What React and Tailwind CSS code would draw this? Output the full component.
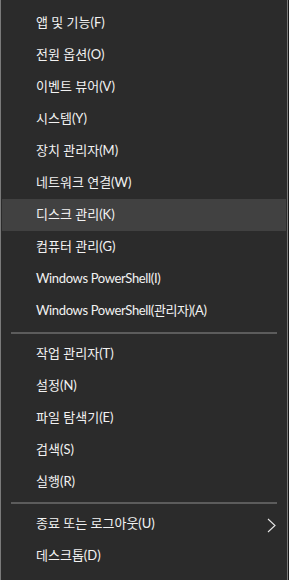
function Item({ label, active, arrow }) {
  const latin = label.startsWith("Windows");
  return (
    <div
      className={
        "flex h-8 items-center justify-between pl-[34px] pr-[10px] " +
        (active ? "bg-[#414141]" : "")
      }
    >
      <span className={latin ? "tracking-[-0.35px]" : ""}>{label}</span>
      {arrow && (
        <svg width="9" height="15" viewBox="0 0 9 15" fill="none" className="mt-[2px]">
          <path d="M1 1 L8 7.5 L1 14" stroke="#e6e6e6" strokeWidth="1.1" />
        </svg>
      )}
    </div>
  );
}

function Separator({ h }) {
  return (
    <div className={"flex items-center px-[9px] " + h}>
      <div className="h-[2px] w-full bg-[#5c5c5c]" />
    </div>
  );
}

export default function App() {
  const first = [
    "앱 및 기능(F)",
    "전원 옵션(O)",
    "이벤트 뷰어(V)",
    "시스템(Y)",
    "장치 관리자(M)",
    "네트워크 연결(W)",
    "디스크 관리(K)",
    "컴퓨터 관리(G)",
    "Windows PowerShell(I)",
    "Windows PowerShell(관리자)(A)",
  ];
  const second = ["작업 관리자(T)", "설정(N)", "파일 탐색기(E)", "검색(S)", "실행(R)"];

  return (
    <div className="flex h-[580px] w-[289px] bg-[#1a1a1a]">
      <div
        className="flex h-full w-[288px] flex-col border-x border-[#7a7a7a] bg-[#2b2b2b] px-px pt-[7px] text-[13px] text-[#f2f2f2]"
        style={{ fontFamily: 'Lato, "Noto Sans CJK KR", sans-serif' }}
      >
        {first.map((t) => (
          <Item key={t} label={t} active={t === "디스크 관리(K)"} />
        ))}
        <Separator h="h-[11px]" />
        {second.map((t) => (
          <Item key={t} label={t} />
        ))}
        <Separator h="h-[10px]" />
        <Item label="종료 또는 로그아웃(U)" arrow />
        <Item label="데스크톱(D)" />
      </div>
    </div>
  );
}
